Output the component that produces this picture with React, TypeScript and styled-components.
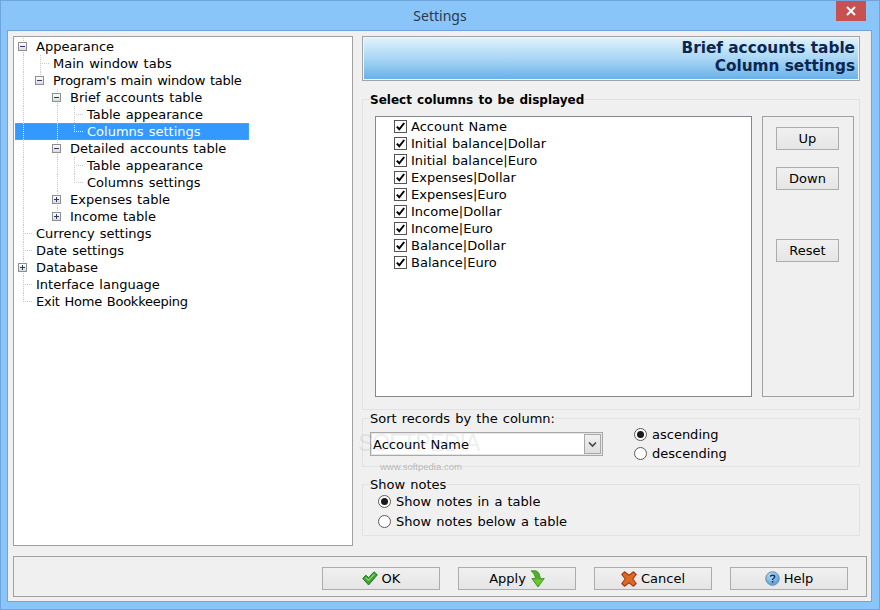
import { FC } from "react";
import styled, { createGlobalStyle } from "styled-components";

const GlobalStyle = createGlobalStyle`
    html, body {
        margin: 0;
        padding: 0;
        background: #8ac5fa;
    }
    body {
        font-family: "DejaVu Sans", sans-serif;
        font-size: 13px;
        word-spacing: 1px;
        color: #000;
    }
`;

const Window = styled.div`
    position: relative;
    box-sizing: border-box;
    width: 880px;
    height: 610px;
    border: 1px solid #6fa5dc;
    background: #8ac5fa;
    display: flex;
    flex-direction: column;
    overflow: hidden;
`;

const TitleBar = styled.header`
    position: relative;
    flex: 0 0 29px;
    display: flex;
    align-items: center;
    justify-content: center;
    font-family: "Noto Sans", sans-serif;
    font-size: 14px;
    color: #2b3a4a;
`;

const CloseButton = styled.div`
    position: absolute;
    top: 0;
    right: 13px;
    width: 30px;
    height: 20px;
    background: #c75050;
    display: flex;
    align-items: center;
    justify-content: center;
`;

const Client = styled.div`
    box-sizing: border-box;
    width: 865px;
    height: 572px;
    margin-left: 6px;
    border: 1px solid #6fa5dc;
    background: #f0f0f0;
    padding: 5px 4px 4px 5px;
    display: flex;
    flex-direction: column;
    gap: 10px;
`;

const Body = styled.div`
    display: flex;
    gap: 9px;
    height: 510px;
`;

const TreePanel = styled.div`
    box-sizing: border-box;
    flex: 0 0 340px;
    border: 1px solid #a0a0a0;
    background: #fff;
    padding-top: 1px;
`;

const TreeRow = styled.div<{ $selected?: boolean }>`
    display: flex;
    height: 17px;
    width: 234px;
    margin-left: 1px;
    line-height: 17px;
    white-space: nowrap;
    box-sizing: border-box;
    color: ${(p) => (p.$selected ? "#fff" : "#000")};
    background: ${(p) => (p.$selected ? "#3399ff" : "transparent")};
    outline: ${(p) => (p.$selected ? "1px dotted #d98a2b" : "none")};
    outline-offset: -1px;
    --guide: ${(p) => (p.$selected ? "#fff" : "#c8c8c8")};
`;

const dots = (dir: string) =>
    `repeating-linear-gradient(to ${dir}, var(--guide) 0 1px, transparent 1px 2px)`;

const TreeCell = styled.span<{ $line?: "full" | "half"; $branch?: boolean }>`
    flex: 0 0 17px;
    height: 17px;
    display: flex;
    align-items: center;
    justify-content: center;
    background-repeat: no-repeat;
    background-image: ${(p) =>
        [p.$line ? dots("bottom") : "", p.$branch ? dots("right") : ""]
            .filter(Boolean)
            .join(", ") || "none"};
    background-size: ${(p) =>
        [
            p.$line ? (p.$line === "half" ? "1px 9px" : "1px 17px") : "",
            p.$branch ? "9px 1px" : "",
        ]
            .filter(Boolean)
            .join(", ") || "auto"};
    background-position: ${(p) =>
        [p.$line ? "8px 0" : "", p.$branch ? "8px 8px" : ""]
            .filter(Boolean)
            .join(", ") || "0 0"};
`;

const TreeLabel = styled.span<{ $tight?: boolean }>`
    padding-left: 4px;
    letter-spacing: ${(p) => (p.$tight ? "-0.25px" : "0")};
`;

const ExpanderBox = styled.svg`
    margin-left: -2px;
`;

const RightColumn = styled.div`
    flex: 0 0 498px;
    display: flex;
    flex-direction: column;
`;

const Banner = styled.div`
    box-sizing: border-box;
    flex: 0 0 45px;
    margin-bottom: 10px;
    border: 1px solid #a4a4a4;
    box-shadow: inset 0 0 0 1px #f4f4f4;
    background: linear-gradient(to bottom, #e2f4fd 0%, #a9d6f4 50%, #68afe8 100%);
    padding: 2px 4px 0 0;
    text-align: right;
    font-size: 15.3px;
    line-height: 18px;
    font-weight: bold;
    word-spacing: 0;
    color: #0c2650;
`;

const Group = styled.fieldset<{ $height: number; $gapTop?: number }>`
    box-sizing: border-box;
    height: ${(p) => p.$height}px;
    margin: ${(p) => p.$gapTop ?? 0}px 0 0;
    padding: 0;
    min-width: 0;
    border: 1px solid #e2e2e2;
`;

const Legend = styled.legend<{ $bold?: boolean }>`
    margin-left: 7px;
    padding: 0;
    height: 17px;
    line-height: ${(p) => (p.$bold ? "19px" : "17px")};
    font-size: ${(p) => (p.$bold ? "12px" : "13px")};
    font-weight: ${(p) => (p.$bold ? "bold" : "normal")};
`;

const ColumnsRow = styled.div`
    display: flex;
    gap: 10px;
    padding: 8px 5px 0 12px;
`;

const ColumnList = styled.div`
    box-sizing: border-box;
    width: 377px;
    height: 281px;
    border: 1px solid #828790;
    background: #fff;
    padding: 1px 0 0 18px;
`;

const CheckRow = styled.label`
    display: flex;
    align-items: center;
    gap: 4px;
    height: 17px;
    line-height: 17px;
`;

const CheckBox = styled.span`
    box-sizing: border-box;
    width: 13px;
    height: 13px;
    border: 1px solid #555;
    background: #fff;
    display: flex;
    align-items: center;
    justify-content: center;
`;

const MovePanel = styled.div`
    box-sizing: border-box;
    width: 92px;
    height: 281px;
    border: 1px solid #a0a0a0;
    padding: 10px 0 0 13px;
    display: flex;
    flex-direction: column;
`;

const Button = styled.button<{ $width: number; $gapAfter?: number }>`
    box-sizing: border-box;
    width: ${(p) => p.$width}px;
    height: 23px;
    margin: 0 0 ${(p) => p.$gapAfter ?? 0}px;
    padding: 0;
    border: 1px solid #acacac;
    background: linear-gradient(to bottom, #f0f0f0, #e5e5e5);
    font-family: inherit;
    font-size: 13px;
    color: #000;
    display: flex;
    align-items: center;
    justify-content: center;
    gap: 4px;
`;

const SortRow = styled.div`
    display: flex;
    padding: 5px 0 0 7px;
`;

const Combo = styled.div`
    box-sizing: border-box;
    width: 233px;
    height: 24px;
    border: 1px solid #a8a8a8;
    box-shadow: inset 0 0 0 1px #e6e6e6;
    background: #fff;
    display: flex;
    align-items: center;
    justify-content: space-between;
    padding: 0 1px 0 2px;
`;

const ComboArrow = styled.span`
    box-sizing: border-box;
    width: 17px;
    height: 20px;
    border: 1px solid #a8a8a8;
    background: linear-gradient(to bottom, #f0f0f0, #dedede);
    display: flex;
    align-items: center;
    justify-content: center;
`;

const RadioStack = styled.div<{ $left: number; $top?: number; $gap: number }>`
    display: flex;
    flex-direction: column;
    gap: ${(p) => p.$gap}px;
    margin: ${(p) => p.$top ?? 0}px 0 0 ${(p) => p.$left}px;
`;

const RadioRow = styled.label`
    display: flex;
    align-items: center;
    gap: 5px;
    height: 17px;
    line-height: 17px;
`;

const Radio = styled.span<{ $on?: boolean }>`
    box-sizing: border-box;
    width: 13px;
    height: 13px;
    border-radius: 50%;
    border: 1px solid #5a5a5a;
    background: #fff;
    display: flex;
    align-items: center;
    justify-content: center;
    &::after {
        content: "";
        width: 7px;
        height: 7px;
        border-radius: 50%;
        background: ${(p) => (p.$on ? "#1a1a1a" : "transparent")};
    }
`;

const Footer = styled.div`
    box-sizing: border-box;
    width: 854px;
    height: 41px;
    border: 1px solid #a0a0a0;
    padding: 10px 18px 0 308px;
    display: flex;
    gap: 18px;
`;

const WatermarkLogo = styled.span`
    position: absolute;
    left: 357px;
    top: 429px;
    font-family: "Liberation Sans", sans-serif;
    font-size: 23px;
    letter-spacing: -1px;
    color: rgba(120, 120, 120, 0.14);
    pointer-events: none;
`;

const WatermarkUrl = styled.span`
    position: absolute;
    left: 379px;
    top: 460px;
    font-family: "Liberation Sans", sans-serif;
    font-size: 9.5px;
    color: rgba(110, 110, 110, 0.45);
    pointer-events: none;
`;

type Node = {
    label: string;
    kind: "minus" | "plus" | "leaf";
    guides: boolean[];
    last?: boolean;
    selected?: boolean;
    tight?: boolean;
};

const tree: Node[] = [
    { label: "Appearance", kind: "minus", guides: [] },
    { label: "Main window tabs", kind: "leaf", guides: [true] },
    { label: "Program's main window table", kind: "minus", guides: [true], last: true, tight: true },
    { label: "Brief accounts table", kind: "minus", guides: [true, false] },
    { label: "Table appearance", kind: "leaf", guides: [true, false, true] },
    { label: "Columns settings", kind: "leaf", guides: [true, false, true], last: true, selected: true },
    { label: "Detailed accounts table", kind: "minus", guides: [true, false] },
    { label: "Table appearance", kind: "leaf", guides: [true, false, true] },
    { label: "Columns settings", kind: "leaf", guides: [true, false, true], last: true },
    { label: "Expenses table", kind: "plus", guides: [true, false] },
    { label: "Income table", kind: "plus", guides: [true, false], last: true },
    { label: "Currency settings", kind: "leaf", guides: [] },
    { label: "Date settings", kind: "leaf", guides: [] },
    { label: "Database", kind: "plus", guides: [] },
    { label: "Interface language", kind: "leaf", guides: [] },
    { label: "Exit Home Bookkeeping", kind: "leaf", guides: [], last: true, tight: true },
];

const columns = [
    "Account Name",
    "Initial balance|Dollar",
    "Initial balance|Euro",
    "Expenses|Dollar",
    "Expenses|Euro",
    "Income|Dollar",
    "Income|Euro",
    "Balance|Dollar",
    "Balance|Euro",
];

const Expander: FC<{ open: boolean }> = ({ open }) => (
    <ExpanderBox width="9" height="9" viewBox="0 0 9 9">
        <defs>
            <linearGradient id="exp" x1="0" y1="0" x2="0" y2="1">
                <stop offset="0" stopColor="#ffffff" />
                <stop offset="1" stopColor="#d8d8d8" />
            </linearGradient>
        </defs>
        <rect x="0.5" y="0.5" width="8" height="8" fill="url(#exp)" stroke="#8e8f8f" />
        <path d={open ? "M2 4.5H7" : "M2 4.5H7M4.5 2V7"} stroke="#2a3c6c" />
    </ExpanderBox>
);

const Tick: FC = () => (
    <svg width="11" height="11" viewBox="0 0 11 11">
        <path d="M1.8 5.6L4.3 8.3L9.2 2" fill="none" stroke="#000" strokeWidth="2" />
    </svg>
);

const OkIcon: FC = () => (
    <svg width="16" height="15" viewBox="0 0 16 15">
        <path
            d="M0.7 7.5L3.8 4.2L6.6 6.6L12 0.8L15.4 3.8L6.6 14Z"
            fill="#3f9f35"
            stroke="#2a7a2c"
            strokeLinejoin="round"
        />
        <path d="M3.4 6.8L6.5 9.4L12.4 3" fill="none" stroke="#83d65c" strokeWidth="1.4" />
    </svg>
);

const ApplyIcon: FC = () => (
    <svg width="15" height="18" viewBox="0 0 15 18">
        <path
            d="M1 0.8L6 0.8C9 2 10 5 10.300 8.500H14.300L8 17L1.800 8.500H5.300C5.300 5.500 3.500 3 1 0.8Z"
            fill="#52ad2a"
            stroke="#3d8f1f"
            strokeWidth="0.8"
            strokeLinejoin="round"
        />
        <path d="M3.500 9.500H13L8 15.500Z" fill="#6cc92f" />
    </svg>
);

const CancelIcon: FC = () => (
    <svg width="16" height="16" viewBox="0 0 16 16">
        <path
            d="M3.500 0.800L8 4.300L12.500 0.800L15.200 3.500L11.700 8L15.200 12.500L12.500 15.200L8 11.700L3.500 15.200L0.800 12.500L4.300 8L0.800 3.500Z"
            fill="#dc6a22"
            stroke="#a83a1a"
            strokeWidth="1.200"
            strokeLinejoin="round"
        />
    </svg>
);

const HelpIcon: FC = () => (
    <svg width="15" height="15" viewBox="0 0 15 15">
        <defs>
            <radialGradient id="help" cx="0.4" cy="0.3" r="0.8">
                <stop offset="0" stopColor="#b9e2f8" />
                <stop offset="1" stopColor="#3d93d8" />
            </radialGradient>
        </defs>
        <circle cx="7.500" cy="7.500" r="6.800" fill="url(#help)" stroke="#7c8ea0" />
        <path d="M5.500 5.800C5.500 3.800 9.700 3.800 9.700 5.800C9.700 7.300 7.600 7.200 7.600 9" fill="none" stroke="#17365d" strokeWidth="1.500" />
        <rect x="6.800" y="10" width="1.600" height="1.600" fill="#17365d" />
    </svg>
);

const TreeItem: FC<{ node: Node }> = ({ node }) => (
    <TreeRow $selected={node.selected}>
        {node.guides.map((on, i) => (
            <TreeCell key={i} $line={on ? "full" : undefined} />
        ))}
        <TreeCell $line={node.last ? "half" : "full"} $branch={node.kind === "leaf"}>
            {node.kind !== "leaf" && <Expander open={node.kind === "minus"} />}
        </TreeCell>
        <TreeLabel $tight={node.tight}>{node.label}</TreeLabel>
    </TreeRow>
);

const App: FC = () => {
    return (
        <Window>
            <GlobalStyle />
            <TitleBar>
                Settings
                <CloseButton>
                    <svg width="10" height="10" viewBox="0 0 10 10">
                        <path d="M1 1L9 9M9 1L1 9" stroke="#fff" strokeWidth="2" />
                    </svg>
                </CloseButton>
            </TitleBar>
            <Client>
                <Body>
                    <TreePanel>
                        {tree.map((node, i) => (
                            <TreeItem key={i} node={node} />
                        ))}
                    </TreePanel>
                    <RightColumn>
                        <Banner>
                            Brief accounts table
                            <br />
                            Column settings
                        </Banner>
                        <Group $height={319}>
                            <Legend $bold>Select columns to be displayed</Legend>
                            <ColumnsRow>
                                <ColumnList>
                                    {columns.map((name) => (
                                        <CheckRow key={name}>
                                            <CheckBox>
                                                <Tick />
                                            </CheckBox>
                                            {name}
                                        </CheckRow>
                                    ))}
                                </ColumnList>
                                <MovePanel>
                                    <Button $width={63} $gapAfter={17}>Up</Button>
                                    <Button $width={63} $gapAfter={49}>Down</Button>
                                    <Button $width={63}>Reset</Button>
                                </MovePanel>
                            </ColumnsRow>
                        </Group>
                        <Group $height={57}>
                            <Legend>Sort records by the column:</Legend>
                            <SortRow>
                                <Combo>
                                    Account Name
                                    <ComboArrow>
                                        <svg width="9" height="7" viewBox="0 0 9 7">
                                            <path d="M1 1.500L4.500 5L8 1.500" fill="none" stroke="#444" strokeWidth="1.600" />
                                        </svg>
                                    </ComboArrow>
                                </Combo>
                                <RadioStack $left={31} $top={-6} $gap={2}>
                                    <RadioRow>
                                        <Radio $on />
                                        ascending
                                    </RadioRow>
                                    <RadioRow>
                                        <Radio />
                                        descending
                                    </RadioRow>
                                </RadioStack>
                            </SortRow>
                        </Group>
                        <Group $height={60} $gapTop={9}>
                            <Legend>Show notes</Legend>
                            <RadioStack $left={15} $gap={3}>
                                <RadioRow>
                                    <Radio $on />
                                    Show notes in a table
                                </RadioRow>
                                <RadioRow>
                                    <Radio />
                                    Show notes below a table
                                </RadioRow>
                            </RadioStack>
                        </Group>
                    </RightColumn>
                </Body>
                <Footer>
                    <Button $width={118}>
                        <OkIcon />
                        OK
                    </Button>
                    <Button $width={118}>
                        Apply
                        <ApplyIcon />
                    </Button>
                    <Button $width={118}>
                        <CancelIcon />
                        Cancel
                    </Button>
                    <Button $width={118}>
                        <HelpIcon />
                        Help
                    </Button>
                </Footer>
            </Client>
            <WatermarkLogo>SOFTPEDIA</WatermarkLogo>
            <WatermarkUrl>www.softpedia.com</WatermarkUrl>
        </Window>
    );
};

export default App;
